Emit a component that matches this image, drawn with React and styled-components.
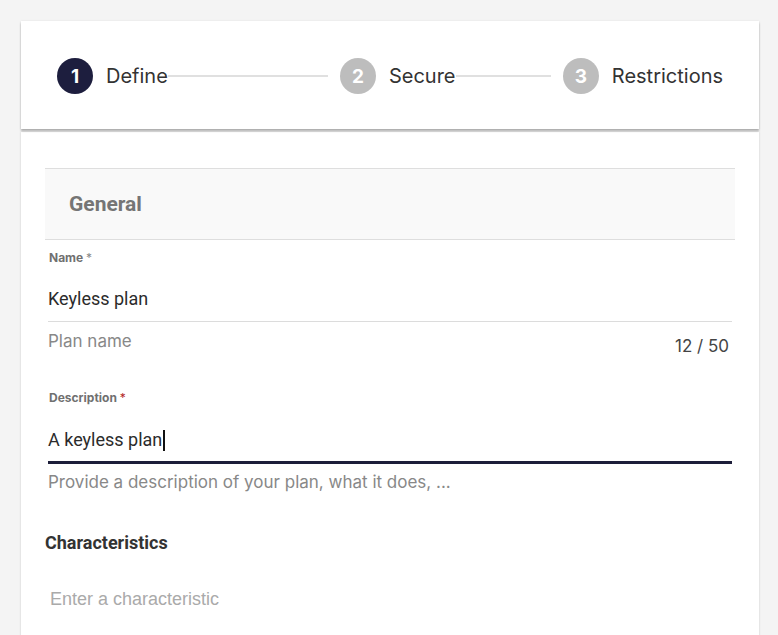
import React from "react";
import styled, { createGlobalStyle } from "styled-components";

const GlobalStyle = createGlobalStyle`
  body {
    margin: 0;
    background-color: #f4f4f4;
    font-family: Inter, Roboto, "Noto Sans", Arial, sans-serif;
    color: #333;
  }
`;

const steps = [
  { num: 1, label: "Define", active: true, line: 163 },
  { num: 2, label: "Secure", active: false, line: 97 },
  { num: 3, label: "Restrictions", active: false },
];

function App() {
  return (
    <Page>
      <GlobalStyle />
      <StepperCard>
        {steps.map((s) => (
          <React.Fragment key={s.num}>
            <Circle $active={s.active}>{s.num}</Circle>
            <StepLabel>{s.label}</StepLabel>
            {s.line && <Connector $grow={s.line} />}
          </React.Fragment>
        ))}
      </StepperCard>

      <BodyCard>
        <SectionHeader>General</SectionHeader>

        <Field>
          <Label>
            Name <Star>*</Star>
          </Label>
          <Input>Keyless plan</Input>
          <HelperRow>
            <Helper>Plan name</Helper>
            <Counter>12 / 50</Counter>
          </HelperRow>
        </Field>

        <Field $gap={34}>
          <Label>
            Description <Star $required>*</Star>
          </Label>
          <Input $focused>
            A keyless plan
            <Caret />
          </Input>
          <HelperRow $gap={8}>
            <Helper>Provide a description of your plan, what it does, ...</Helper>
          </HelperRow>
        </Field>

        <SubTitle>Characteristics</SubTitle>
        <Placeholder>Enter a characteristic</Placeholder>
      </BodyCard>
    </Page>
  );
}

const Page = styled.div`
  padding: 21px 19px 0 21px;
  height: 614px;
  overflow: hidden;
`;

const StepperCard = styled.div`
  height: 108px;
  background-color: #fff;
  box-shadow: 0 2px 2px rgba(0, 0, 0, 0.28), 0 0 2px rgba(0, 0, 0, 0.08);
  display: flex;
  align-items: center;
  padding: 2px 36px 0;
  box-sizing: border-box;
  position: relative;
  z-index: 1;
`;

const Circle = styled.div`
  width: 36px;
  height: 36px;
  flex-shrink: 0;
  border-radius: 50%;
  background-color: ${(p) => (p.$active ? "#1d1e3e" : "#bdbdbd")};
  color: #fff;
  font-size: 19px;
  font-weight: 700;
  display: flex;
  align-items: center;
  justify-content: center;
`;

const StepLabel = styled.span`
  margin-left: 13px;
  font-size: 20px;
  color: #333;
  white-space: nowrap;
`;

const Connector = styled.div`
  flex: ${(p) => p.$grow} 1 0;
  height: 2px;
  background-color: #e0e0e0;
  margin-right: 12px;
`;

const BodyCard = styled.div`
  margin-top: 3px;
  background-color: #fff;
  box-shadow: 0 0 2px rgba(0, 0, 0, 0.18);
  padding: 36px 24px 40px;
  height: 100%;
`;

const SectionHeader = styled.div`
  height: 70px;
  border-top: 1px solid #dedede;
  border-bottom: 1px solid #dedede;
  background-color: #f9f9f9;
  padding-left: 24px;
  display: flex;
  align-items: center;
  font-family: Roboto, Arial, sans-serif;
  font-size: 21px;
  font-weight: 700;
  color: #757575;
`;

const Field = styled.div`
  margin-top: ${(p) => (p.$gap ? p.$gap : 10)}px;
  padding: 0 3px;
`;

const Label = styled.div`
  font-size: 12px;
  line-height: 16px;
  font-weight: 700;
  color: #707070;
  padding-left: 1px;
`;

const Star = styled.span`
  color: ${(p) => (p.$required ? "#b3261e" : "#888")};
  font-weight: 400;
`;

const Input = styled.div`
  font-family: Roboto, Arial, sans-serif;
  font-size: 18px;
  line-height: 24px;
  color: #2b2b2b;
  padding: ${(p) => (p.$focused ? "22px 0 9px" : "21px 0 10px")};
  border-bottom: ${(p) => (p.$focused ? "3px solid #1d1e3a" : "1px solid #dcdcdc")};
  display: flex;
  align-items: center;
`;

const Caret = styled.span`
  display: inline-block;
  width: 2px;
  height: 21px;
  background-color: #111;
  margin-left: 1px;
`;

const HelperRow = styled.div`
  display: flex;
  justify-content: space-between;
  align-items: flex-start;
  margin-top: ${(p) => (p.$gap ? p.$gap : 9)}px;
`;

const Helper = styled.span`
  font-size: 17px;
  line-height: 20px;
  color: #888;
`;

const Counter = styled.span`
  font-size: 17px;
  line-height: 20px;
  color: #444;
  margin-top: 5px;
  margin-right: 3px;
`;

const SubTitle = styled.div`
  margin-top: 40px;
  font-family: Roboto, Arial, sans-serif;
  font-size: 18px;
  line-height: 22px;
  font-weight: 700;
  color: #333;
`;

const Placeholder = styled.div`
  margin-top: 33px;
  padding-left: 5px;
  font-family: "Liberation Sans", Arial, sans-serif;
  font-size: 18px;
  line-height: 24px;
  color: #aaa;
`;

export default App;
